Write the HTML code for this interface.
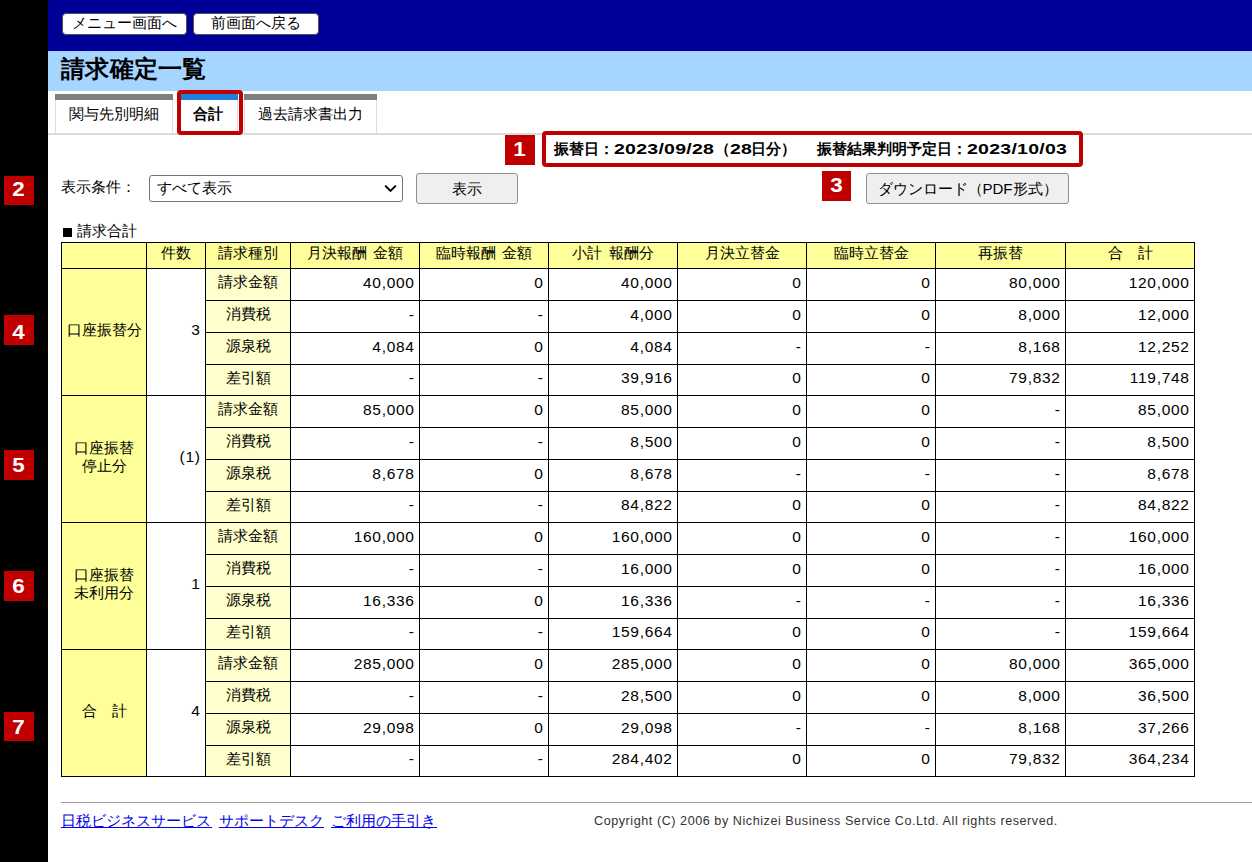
<!DOCTYPE html>
<html lang="ja"><head><meta charset="utf-8"><title>請求確定一覧</title>
<style>
*{box-sizing:border-box;}
html,body{margin:0;padding:0;}
body{width:1252px;height:862px;overflow:hidden;background:#fff;position:relative;font-family:"Liberation Sans",sans-serif;color:#000;font-size:15px;}
.abs{position:absolute;}
#side{left:0;top:0;width:48px;height:862px;background:#000;}
#top{left:48px;top:0;width:1204px;height:51px;background:#000099;}
#title{left:48px;top:51px;width:1204px;height:40px;background:#a6d5ff;}
#title h1{margin:0;position:absolute;left:13px;top:4px;font-size:23.5px;letter-spacing:0.3px;line-height:28px;font-weight:bold;white-space:nowrap;}
.tbtn{position:absolute;top:13px;height:22px;background:#fff;border:1.5px solid #505050;border-radius:4px;font-size:15px;line-height:18px;text-align:center;white-space:nowrap;overflow:hidden;}
.tab{position:absolute;top:94px;height:40px;background:#fff;border-left:1px solid #ddd;border-right:1px solid #ddd;font-size:15px;line-height:28px;text-align:center;white-space:nowrap;padding-top:6px;}
.tab::before{content:"";position:absolute;left:-1px;right:-1px;top:0;height:6px;background:#7f7f7f;}
.tab.sel{font-weight:bold;}
.tab.sel::before{background:#1e80dc;}
#tabline{left:48px;top:133px;width:1204px;height:2px;background:#dcdcdc;}
.redbox{position:absolute;border:4px solid #c00000;border-radius:4px;}
.num{position:absolute;width:30px;height:30px;background:#c00000;color:#fff;font-weight:bold;font-size:20px;line-height:30px;text-align:center;}
.btn{position:absolute;background:#efefef;border:1px solid #8f8f8f;border-radius:3px;font-size:15px;text-align:center;white-space:nowrap;overflow:hidden;}
table{position:absolute;left:61px;top:242px;width:1133px;border-collapse:collapse;table-layout:fixed;font-size:15px;}
th,td{border:1px solid #000;padding:0 4px 0 0;overflow:hidden;white-space:nowrap;}
thead th{background:#ffff99;font-weight:normal;text-align:center;height:26px;padding:0 0 6px 0;line-height:18px;word-spacing:2px;}
th.g{background:#ffff99;font-weight:normal;text-align:center;padding:0 0 5px 0;line-height:17.4px;}
th.k{background:#ffffcc;font-weight:normal;text-align:center;padding:0 0 4px 0;}
td{text-align:right;background:#fff;font-size:15.5px;letter-spacing:0.7px;padding:0 4.4px 4px 0;}
td.c{padding:0 4.4px 5px 0;}
a{color:#0000ee;text-decoration:none;display:inline-block;height:16px;line-height:17px;border-bottom:1px solid #0000ee;vertical-align:top;margin-top:1px;white-space:nowrap;overflow:visible;}
.num span{display:inline-block;transform:scaleX(1.12);}
.vb{display:inline-block;font-size:15px;transform:scaleX(1.3);transform-origin:0 50%;letter-spacing:0.2px;}
.fx{display:inline-block;white-space:nowrap;overflow:visible;vertical-align:baseline;}
.sq{display:inline-block;width:9px;height:9px;background:#000;margin:0 5px 0 1px;vertical-align:-0.5px;}
</style></head><body>
<div id="side" class="abs"></div>
<div id="top" class="abs">
  <div class="tbtn" style="left:13.5px;width:125.5px;">メニュー画面へ</div>
  <div class="tbtn" style="left:145.3px;width:126px;">前画面へ戻る</div>
</div>
<div id="title" class="abs"><h1>請求確定一覧</h1></div>
<div class="tab" style="left:55px;width:118px;">関与先別明細</div>
<div class="tab sel" style="left:180px;width:58px;padding-right:3px;">合計</div>
<div class="tab" style="left:244px;width:133px;">過去請求書出力</div>
<div id="tabline" class="abs"></div>
<div class="redbox" style="left:177px;top:90px;width:66px;height:45px;"></div>

<div class="num" style="left:505px;top:135px;line-height:28px;"><span>1</span></div>
<div class="redbox" style="left:542px;top:131px;width:541px;height:36px;"></div>
<div class="abs" style="left:554px;top:138.5px;font-weight:bold;font-size:15px;line-height:20px;white-space:nowrap;"><span class="fx" style="width:60px">振替日：</span><span class="vb" style="width:101px">2023/09/28</span><span class="fx" style="width:15px">（</span><span class="vb" style="width:21px">28</span><span class="fx" style="width:45px">日分）</span></div>
<div class="abs" style="left:817px;top:138.5px;font-weight:bold;font-size:15px;line-height:20px;white-space:nowrap;"><span class="fx" style="width:150px">振替結果判明予定日：</span><span class="vb" style="width:101px">2023/10/03</span></div>

<div class="num" style="left:4px;top:176px;height:29px;line-height:26px;"><span>2</span></div>
<div class="abs" style="left:61px;top:177px;font-size:15px;line-height:20px;white-space:nowrap;">表示条件：</div>
<div class="abs" id="sel" style="left:149px;top:175px;width:254px;height:27px;border:1px solid #767676;border-radius:3px;background:#fff;font-size:15px;line-height:24px;padding-left:7px;white-space:nowrap;">すべて表示<svg style="position:absolute;right:5px;top:8px" width="13" height="9" viewBox="0 0 13 9"><path d="M1.2 1.6 L6.5 6.9 L11.8 1.6" fill="none" stroke="#000" stroke-width="2"/></svg></div>
<div class="btn" style="left:416px;top:172.5px;width:102px;height:31px;line-height:29px;">表示</div>

<div class="num" style="left:822px;top:171px;width:29px;line-height:28px;"><span>3</span></div>
<div class="btn" style="left:866px;top:172.5px;width:203px;height:31px;line-height:29px;">ダウンロード（PDF形式）</div>

<div class="abs" style="left:62px;top:222px;font-size:14.5px;line-height:18px;white-space:nowrap;"><span class="sq"></span>請求合計</div>

<div class="num" style="left:4px;top:315px;line-height:34px;"><span>4</span></div>
<div class="num" style="left:4px;top:450px;line-height:30px;"><span>5</span></div>
<div class="num" style="left:4px;top:571px;line-height:30px;"><span>6</span></div>
<div class="num" style="left:4px;top:712px;height:29px;line-height:30px;"><span>7</span></div>

<table>
<colgroup><col style="width:85px"><col style="width:59px"><col style="width:85px"><col style="width:129px"><col style="width:129px"><col style="width:129px"><col style="width:129px"><col style="width:129px"><col style="width:130px"><col style="width:129px"></colgroup>
<thead><tr><th></th><th>件数</th><th>請求種別</th><th>月決報酬 金額</th><th>臨時報酬 金額</th><th>小計 報酬分</th><th>月決立替金</th><th>臨時立替金</th><th>再振替</th><th>合　計</th></tr></thead>
<tbody>
<tr style="height:32px"><th class="g" rowspan="4">口座振替分</th><td class="c" rowspan="4">3</td><th class="k">請求金額</th><td>40,000</td><td>0</td><td>40,000</td><td>0</td><td>0</td><td>80,000</td><td>120,000</td></tr>
<tr style="height:32px"><th class="k">消費税</th><td>-</td><td>-</td><td>4,000</td><td>0</td><td>0</td><td>8,000</td><td>12,000</td></tr>
<tr style="height:32px"><th class="k">源泉税</th><td>4,084</td><td>0</td><td>4,084</td><td>-</td><td>-</td><td>8,168</td><td>12,252</td></tr>
<tr style="height:31px"><th class="k">差引額</th><td>-</td><td>-</td><td>39,916</td><td>0</td><td>0</td><td>79,832</td><td>119,748</td></tr>
<tr style="height:32px"><th class="g" rowspan="4">口座振替<br>停止分</th><td class="c" rowspan="4">(1)</td><th class="k">請求金額</th><td>85,000</td><td>0</td><td>85,000</td><td>0</td><td>0</td><td>-</td><td>85,000</td></tr>
<tr style="height:32px"><th class="k">消費税</th><td>-</td><td>-</td><td>8,500</td><td>0</td><td>0</td><td>-</td><td>8,500</td></tr>
<tr style="height:32px"><th class="k">源泉税</th><td>8,678</td><td>0</td><td>8,678</td><td>-</td><td>-</td><td>-</td><td>8,678</td></tr>
<tr style="height:31px"><th class="k">差引額</th><td>-</td><td>-</td><td>84,822</td><td>0</td><td>0</td><td>-</td><td>84,822</td></tr>
<tr style="height:32px"><th class="g" rowspan="4">口座振替<br>未利用分</th><td class="c" rowspan="4">1</td><th class="k">請求金額</th><td>160,000</td><td>0</td><td>160,000</td><td>0</td><td>0</td><td>-</td><td>160,000</td></tr>
<tr style="height:32px"><th class="k">消費税</th><td>-</td><td>-</td><td>16,000</td><td>0</td><td>0</td><td>-</td><td>16,000</td></tr>
<tr style="height:32px"><th class="k">源泉税</th><td>16,336</td><td>0</td><td>16,336</td><td>-</td><td>-</td><td>-</td><td>16,336</td></tr>
<tr style="height:31px"><th class="k">差引額</th><td>-</td><td>-</td><td>159,664</td><td>0</td><td>0</td><td>-</td><td>159,664</td></tr>
<tr style="height:32px"><th class="g" rowspan="4">合　計</th><td class="c" rowspan="4">4</td><th class="k">請求金額</th><td>285,000</td><td>0</td><td>285,000</td><td>0</td><td>0</td><td>80,000</td><td>365,000</td></tr>
<tr style="height:32px"><th class="k">消費税</th><td>-</td><td>-</td><td>28,500</td><td>0</td><td>0</td><td>8,000</td><td>36,500</td></tr>
<tr style="height:32px"><th class="k">源泉税</th><td>29,098</td><td>0</td><td>29,098</td><td>-</td><td>-</td><td>8,168</td><td>37,266</td></tr>
<tr style="height:31px"><th class="k">差引額</th><td>-</td><td>-</td><td>284,402</td><td>0</td><td>0</td><td>79,832</td><td>364,234</td></tr>
</tbody></table>

<div class="abs" style="left:61px;top:802px;width:1191px;height:1px;background:#a0a0a0;"></div>
<div id="links" class="abs" style="left:61px;top:811px;font-size:15.2px;word-spacing:2.7px;line-height:20px;white-space:nowrap;"><a style="width:151px">日税ビジネスサービス</a> <a style="width:105px">サポートデスク</a> <a style="width:106px">ご利用の手引き</a></div>
<div id="copy" class="abs" style="left:594px;top:813px;font-size:12.6px;letter-spacing:0.55px;line-height:16px;white-space:nowrap;color:#333;">Copyright (C) 2006 by Nichizei Business Service Co.Ltd. All rights reserved.</div>
</body></html>
